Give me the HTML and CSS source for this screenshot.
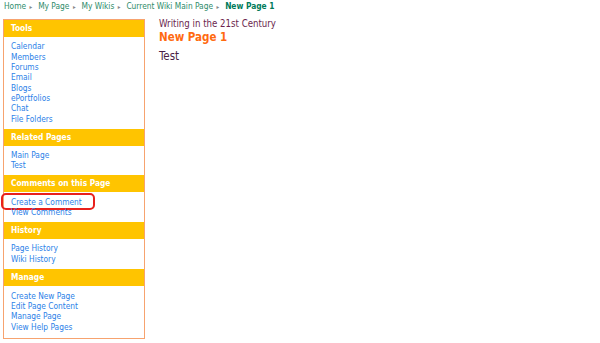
FILE: index.html
```html
<!DOCTYPE html>
<html>
<head>
<meta charset="utf-8">
<link rel="stylesheet" href="styles.css">
</head>
<body>
<div class="crumbs">
  <span class="crumb">Home</span><span class="sep">&#9656;</span>
  <span class="crumb">My Page</span><span class="sep">&#9656;</span>
  <span class="crumb">My Wikis</span><span class="sep">&#9656;</span>
  <span class="crumb">Current Wiki Main Page</span><span class="sep">&#9656;</span>
  <span class="crumb current">New Page 1</span>
</div>
<div class="layout">
  <div class="sidebar">
    <div class="head">Tools</div>
    <ul class="links">
      <li>Calendar</li><li>Members</li><li>Forums</li><li>Email</li><li>Blogs</li><li>ePortfolios</li><li>Chat</li><li>File Folders</li>
    </ul>
    <div class="head">Related Pages</div>
    <ul class="links">
      <li>Main Page</li><li>Test</li>
    </ul>
    <div class="head">Comments on this Page</div>
    <ul class="links">
      <li class="marked">Create a Comment<span class="ring"></span></li><li>View Comments</li>
    </ul>
    <div class="head">History</div>
    <ul class="links">
      <li>Page History</li><li>Wiki History</li>
    </ul>
    <div class="head">Manage</div>
    <ul class="links last">
      <li>Create New Page</li><li>Edit Page Content</li><li>Manage Page</li><li>View Help Pages</li>
    </ul>
  </div>
  <div class="main">
    <div class="wiki">Writing in the 21st Century</div>
    <h1 class="title">New Page 1</h1>
    <p class="body">Test</p>
  </div>
</div>
</body>
</html>
```
FILE: styles.css
```css
html, body { margin: 0; padding: 0; background: #fff; }
body { font-family: "DejaVu Sans Condensed", "DejaVu Sans", Verdana, sans-serif; font-stretch: condensed; width: 600px; height: 343px; overflow: hidden; }
.crumbs { padding: 2px 0 0 4px; height: 11px; font-size: 8.3px; line-height: 9px; color: #2e8b6a; white-space: nowrap; }
.crumb { display: inline-block; }
.crumb.current { font-weight: bold; color: #007a5a; }
.sep { display: inline-block; font-size: 6px; color: #888; margin: 0 3.5px; }
.layout { display: flex; margin-top: 6px; padding-left: 3px; }
.sidebar { width: 140px; border: 1px solid #f7a36f; }
.head { background: #ffc400; color: #fff; font-weight: bold; font-size: 8.3px; height: 17px; line-height: 17px; padding-left: 7px; }
.links { list-style: none; margin: 0; padding: 4.2px 0 4.8px 7px; font-size: 8.3px; line-height: 10.35px; color: #2b7fe8; }
.links.last { padding-top: 5px; padding-bottom: 5.5px; }
.links li { position: relative; }
.ring { position: absolute; left: -10px; top: -3.5px; width: 90px; height: 13px; border: 2px solid #e8201c; border-radius: 5px; }
.main { padding-left: 14px; }
.wiki { font-size: 9.6px; line-height: 12px; color: #6b1f4e; margin-top: -1px; }
.title { margin: 0; font-size: 11.5px; line-height: 14px; color: #ff6a10; font-weight: bold; }
.body { margin: 5px 0 0; font-size: 11.5px; line-height: 14px; color: #4a1f45; }
```
